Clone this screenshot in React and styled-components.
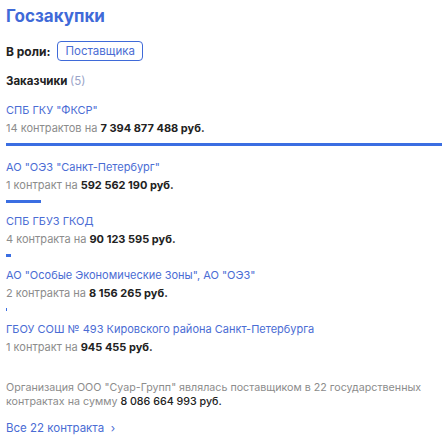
import React from "react";
import styled, { createGlobalStyle } from "styled-components";

const Global = createGlobalStyle`
  html, body { margin: 0; padding: 0; background: #fff; }
  body { font-family: Inter, "Noto Sans", sans-serif; -webkit-font-smoothing: antialiased; }
`;

const Page = styled.div`
  padding: 4px 6px 0 6px;
  width: 448px;
  box-sizing: border-box;
`;

const Title = styled.h2`
  margin: 0;
  font-size: 17px;
  line-height: 24px;
  font-weight: 700;
  color: #3f6ad8;
`;

const RoleRow = styled.div`
  display: flex;
  align-items: center;
  gap: 7px;
  margin-top: 13px;
`;

const Label = styled.span`
  font-size: 12px;
  font-weight: 700;
  color: #222;
`;

const Badge = styled.span`
  display: inline-flex;
  align-items: center;
  height: 18px;
  padding: 0 7px;
  border: 1px solid #3f6ad8;
  border-radius: 4px;
  font-size: 11.5px;
  color: #4a6cd4;
`;

const Section = styled.div`
  margin-top: 12px;
  font-size: 11.5px;
  font-weight: 700;
  color: #222;
  line-height: 16px;
`;

const Count = styled.span`
  font-weight: 400;
  color: #9aa4c8;
`;

const List = styled.div`
  display: flex;
  flex-direction: column;
  margin-top: 13px;
`;

const Item = styled.div`
  display: flex;
  flex-direction: column;
  gap: 2px;
`;

const Name = styled.div`
  font-size: 11px;
  line-height: 16px;
  color: #4a6cd4;
`;

const Sub = styled.div`
  font-size: 11px;
  line-height: 16px;
  color: #8c8c8c;
`;

const Amount = styled.b`
  font-weight: 700;
  color: #222;
`;

const BarTrack = styled.div`
  margin: 7px 0 ${(p) => (p.$first ? 13 : 10)}px;
  height: 3px;
  width: 100%;
`;

const Bar = styled.div`
  height: 100%;
  background: #3b6ee2;
`;

const Summary = styled.p`
  margin: 6px 0 0;
  font-size: 10.7px;
  line-height: 14px;
  color: #8c8c8c;
`;

const SumAmount = styled.span`
  color: #222;
  font-weight: 500;
`;

const AllLink = styled.a`
  display: inline-block;
  margin-top: 12px;
  font-size: 11.5px;
  color: #4a6cd4;
  text-decoration: none;
`;

const items = [
  { name: 'СПБ ГКУ "ФКСР"', count: "14 контрактов", sum: 7394877488 },
  { name: 'АО "ОЭЗ "Санкт-Петербург"', count: "1 контракт", sum: 592562190 },
  { name: "СПБ ГБУЗ ГКОД", count: "4 контракта", sum: 90123595 },
  { name: 'АО "Особые Экономические Зоны", АО "ОЭЗ"', count: "2 контракта", sum: 8156265 },
  { name: "ГБОУ СОШ № 493 Кировского района Санкт-Петербурга", count: "1 контракт", sum: 945455 },
];

const fmt = (n) => String(n).replace(/\B(?=(\d{3})+(?!\d))/g, " ");
const max = items[0].sum;

export default function App() {
  return (
    <Page>
      <Global />
      <Title>Госзакупки</Title>
      <RoleRow>
        <Label>В роли:</Label>
        <Badge>Поставщика</Badge>
      </RoleRow>
      <Section>
        Заказчики <Count>(5)</Count>
      </Section>
      <List>
        {items.map((it, i) => (
          <div key={it.name}>
            <Item>
              <Name>{it.name}</Name>
              <Sub>
                {it.count} на <Amount>{fmt(it.sum)} руб.</Amount>
              </Sub>
            </Item>
            <BarTrack $first={i === 0}>
              <Bar style={{ width: `${(it.sum / max) * 100}%` }} />
            </BarTrack>
          </div>
        ))}
      </List>
      <Summary>
        Организация ООО "Суар-Групп" являлась поставщиком в 22 государственных
        контрактах на сумму <SumAmount>8 086 664 993 руб.</SumAmount>
      </Summary>
      <AllLink href="#">Все 22 контракта&nbsp;&nbsp;›</AllLink>
    </Page>
  );
}
